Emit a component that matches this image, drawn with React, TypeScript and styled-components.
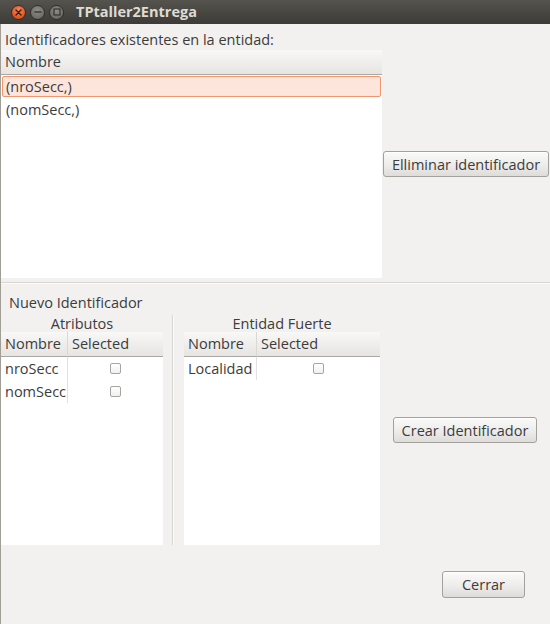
import React from "react";
import styled, { createGlobalStyle } from "styled-components";

const FONT = `"Open Sans", "Noto Sans", "DejaVu Sans", sans-serif`;
const TEXT = "#3c3c3c";
const SIZE = "14.5px";

const Global = createGlobalStyle`
  html, body { margin: 0; padding: 0; background: #f2f1f0; }
  body { font-family: ${FONT}; font-size: ${SIZE}; color: ${TEXT}; }
`;

const Window = styled.div`
  width: 550px;
  height: 624px;
  display: flex;
  flex-direction: column;
  background: #f2f1f0;
  overflow: hidden;
`;

const TitleBar = styled.div`
  height: 24px;
  flex: none;
  display: flex;
  align-items: center;
  background: linear-gradient(#55534d, #3c3b37);
  padding-left: 11px;
`;

const Controls = styled.div`
  display: flex;
  gap: 4px;
  align-items: center;
  margin-right: 12px;
`;

const CircleBtn = styled.div<{ $kind: "close" | "min" | "max" }>`
  width: 15px;
  height: 15px;
  border-radius: 50%;
  display: flex;
  align-items: center;
  justify-content: center;
  box-sizing: border-box;
  border: 1px solid #2f2e2b;
  background: ${(p) =>
    p.$kind === "close"
      ? "radial-gradient(circle at 50% 35%, #f7875c, #e0541f 70%, #c54312)"
      : "radial-gradient(circle at 50% 35%, #8e8c86, #6f6d68 70%, #5d5b57)"};
`;

const Title = styled.div`
  font-family: ${FONT};
  font-weight: 700;
  font-size: 14.5px;
  color: #dfdbd2;
  line-height: 24px;
`;

const Content = styled.div`
  flex: 1;
  display: flex;
  flex-direction: column;
  border-left: 1px solid #a19e98;
  min-height: 0;
`;

const SectionLabel = styled.div<{ $pad: string }>`
  padding: ${(p) => p.$pad};
  line-height: 16px;
  white-space: nowrap;
`;

const TopRow = styled.div`
  display: flex;
  height: 228px;
  flex: none;
`;

const ButtonSlot = styled.div`
  flex: 1;
  display: flex;
  align-items: center;
  justify-content: center;
`;

const Button = styled.button<{ $w: number; $h?: number }>`
  width: ${(p) => p.$w}px;
  height: ${(p) => p.$h ?? 26}px;
  flex: none;
  padding: 0;
  font-family: ${FONT};
  font-size: ${SIZE};
  color: ${TEXT};
  background: linear-gradient(#fafaf9, #ecebe9 60%, #dedcd9);
  border: 1px solid #a3a19c;
  border-radius: 3px;
  box-shadow: inset 0 1px 0 #ffffff;
`;

const HDivider = styled.div`
  margin-top: 4px;
  border-top: 1px solid #d7d6d3;
  border-bottom: 1px solid #fbfbfa;
`;

const PanelsRow = styled.div`
  display: flex;
  height: 230px;
  flex: none;
`;

const Panel = styled.div<{ $w: number }>`
  width: ${(p) => p.$w}px;
  display: flex;
  flex-direction: column;
`;

const PanelTitle = styled.div`
  height: 17px;
  line-height: 17px;
  text-align: center;
  white-space: nowrap;
`;

const VSeparator = styled.div`
  width: 0;
  margin: 0 10px 0 9px;
  border-left: 1px solid #d7d6d3;
  border-right: 1px solid #fbfbfa;
`;

const TableBox = styled.div<{ $w?: number }>`
  background: #ffffff;
  display: flex;
  flex-direction: column;
  ${(p) => (p.$w ? `width: ${p.$w}px; flex: none;` : "flex: 1;")}
`;

const Grid = styled.div<{ $cols: string }>`
  display: grid;
  grid-template-columns: ${(p) => p.$cols};
`;

const HeaderCell = styled.div<{ $last?: boolean }>`
  height: 24px;
  line-height: 24px;
  padding-left: 4px;
  background: linear-gradient(#f8f8f7, #efeeec 50%, #e6e5e2);
  border-bottom: 1px solid #a9a8a4;
  border-right: ${(p) => (p.$last ? "none" : "1px solid #d9d8d5")};
  white-space: nowrap;
`;

const Cell = styled.div<{ $center?: boolean; $last?: boolean }>`
  height: 23px;
  display: flex;
  align-items: center;
  justify-content: ${(p) => (p.$center ? "center" : "flex-start")};
  padding-left: ${(p) => (p.$center ? "0" : "4px")};
  border-right: ${(p) => (p.$last ? "none" : "1px solid #e2e1de")};
  white-space: nowrap;
`;

const Row = styled.div`
  height: 23px;
  box-sizing: border-box;
  padding: 1px;
`;

const RowInner = styled.div<{ $selected?: boolean }>`
  height: 21px;
  box-sizing: border-box;
  display: flex;
  align-items: center;
  padding-left: 3px;
  border-radius: 2px;
  white-space: nowrap;
  border: 1px solid ${(p) => (p.$selected ? "#f2956c" : "transparent")};
  background: ${(p) => (p.$selected ? "#fde5dc" : "transparent")};
`;

const Check = styled.span`
  width: 11px;
  height: 11px;
  box-sizing: border-box;
  border: 1px solid #a6a5a1;
  border-radius: 2px;
  background: linear-gradient(#ffffff, #f1f0ee);
`;

const ActionArea = styled.div`
  flex: 1;
  display: flex;
  align-items: center;
  justify-content: center;
`;

const Footer = styled.div`
  flex: 1;
  display: flex;
  align-items: center;
  justify-content: flex-end;
  padding-right: 25px;
`;

function CheckTable({ cols, rows }: { cols: string; rows: string[] }) {
  return (
    <TableBox>
      <Grid $cols={cols}>
        <HeaderCell>Nombre</HeaderCell>
        <HeaderCell $last>Selected</HeaderCell>
        {rows.map((r) => (
          <React.Fragment key={r}>
            <Cell>{r}</Cell>
            <Cell $center $last>
              <Check />
            </Cell>
          </React.Fragment>
        ))}
      </Grid>
    </TableBox>
  );
}

export default function App() {
  return (
    <Window>
      <Global />
      <TitleBar>
        <Controls>
          <CircleBtn $kind="close">
            <svg width="7" height="7" viewBox="0 0 7 7">
              <path d="M1 1L6 6M6 1L1 6" stroke="#3a1a0c" strokeWidth="1.4" strokeLinecap="round" />
            </svg>
          </CircleBtn>
          <CircleBtn $kind="min">
            <svg width="8" height="8" viewBox="0 0 8 8">
              <path d="M0.5 4H7.5" stroke="#35342f" strokeWidth="1.4" />
            </svg>
          </CircleBtn>
          <CircleBtn $kind="max">
            <svg width="8" height="8" viewBox="0 0 8 8">
              <rect x="1" y="1" width="6" height="6" fill="none" stroke="#35342f" strokeWidth="1.2" />
            </svg>
          </CircleBtn>
        </Controls>
        <Title>TPtaller2Entrega</Title>
      </TitleBar>
      <Content>
        <SectionLabel $pad="8px 0 2px 4px">Identificadores existentes en la entidad:</SectionLabel>
        <TopRow>
          <TableBox $w={381}>
            <HeaderCell $last>Nombre</HeaderCell>
            <Row>
              <RowInner $selected>(nroSecc,)</RowInner>
            </Row>
            <Row>
              <RowInner>(nomSecc,)</RowInner>
            </Row>
          </TableBox>
          <ButtonSlot>
            <Button $w={166}>Elliminar identificador</Button>
          </ButtonSlot>
        </TopRow>
        <HDivider />
        <SectionLabel $pad="11px 0 4px 8px">Nuevo Identificador</SectionLabel>
        <PanelsRow>
          <Panel $w={162}>
            <PanelTitle>Atributos</PanelTitle>
            <CheckTable cols="67px 1fr" rows={["nroSecc", "nomSecc"]} />
          </Panel>
          <VSeparator />
          <Panel $w={196}>
            <PanelTitle>Entidad Fuerte</PanelTitle>
            <CheckTable cols="73px 1fr" rows={["Localidad"]} />
          </Panel>
          <ActionArea>
            <Button $w={144}>Crear Identificador</Button>
          </ActionArea>
        </PanelsRow>
        <Footer>
          <Button $w={83} $h={27}>
            Cerrar
          </Button>
        </Footer>
      </Content>
    </Window>
  );
}
